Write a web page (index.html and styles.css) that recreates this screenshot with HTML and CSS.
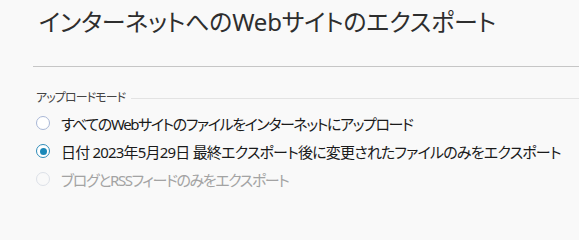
FILE: index.html
```html
<!DOCTYPE html>
<html lang="ja">
<head>
<meta charset="utf-8">
<link rel="stylesheet" href="styles.css">
</head>
<body>
<div class="page">
  <header class="header">
    <h1 class="title">インターネットへのWebサイトのエクスポート</h1>
  </header>
  <section class="group">
    <div class="legend"><span class="legend-text">アップロードモード</span><span class="legend-line"></span></div>
    <label class="option">
      <span class="radio"></span>
      <span class="option-text">すべてのWebサイトのファイルをインターネットにアップロード</span>
    </label>
    <label class="option">
      <span class="radio checked"></span>
      <span class="option-text option-text-mixed">日付 2023年5月29日 最終エクスポート後に変更されたファイルのみをエクスポート</span>
    </label>
    <label class="option disabled">
      <span class="radio"></span>
      <span class="option-text">ブログとRSSフィードのみをエクスポート</span>
    </label>
  </section>
</div>
</body>
</html>
```
FILE: styles.css
```css
html, body {
  margin: 0;
  padding: 0;
  background: #f9f9f9;
}
body {
  font-family: "Noto Sans", "Noto Sans CJK JP", sans-serif;
  font-feature-settings: "palt";
  color: #1a1a1a;
  width: 579px;
  height: 201px;
  overflow: hidden;
}
.header {
  margin-left: 33px;
  padding-left: 6px;
  height: 67px;
  box-sizing: border-box;
  border-bottom: 1px solid #c6c6c6;
}
.title {
  margin: 0;
  padding-top: 5px;
  font-size: 24px;
  font-weight: normal;
  letter-spacing: -0.2px;
  line-height: 34px;
  color: #2e2e2e;
  white-space: nowrap;
}
.group {
  margin-left: 36px;
  margin-top: 20px;
}
.legend {
  display: flex;
  align-items: center;
  height: 20px;
  font-size: 12px;
  letter-spacing: -0.9px;
  color: #444;
}
.legend-line {
  flex: 1;
  height: 1px;
  background: #e3e3e3;
  margin-left: 6px;
  margin-top: 2px;
}
.group .legend + .option {
  margin-top: 2px;
}
.option {
  display: flex;
  align-items: center;
  height: 28px;
  font-size: 15px;
  white-space: nowrap;
}
.option-text {
  letter-spacing: -1.4px;
}
.option-text-mixed {
  letter-spacing: -0.8px;
}
.radio {
  width: 14px;
  height: 14px;
  box-sizing: border-box;
  border: 1.3px solid #a9b7d6;
  border-radius: 50%;
  background: #fff;
  margin-right: 11px;
  display: flex;
  align-items: center;
  justify-content: center;
  flex: none;
}
.radio.checked {
  border-color: #2f8cb9;
}
.radio.checked::after {
  content: "";
  width: 7px;
  height: 7px;
  border-radius: 50%;
  background: #1a88b8;
}
.disabled {
  color: #a3a3a3;
}
.disabled .radio {
  border-color: #dde1e8;
  background: #f9f9f9;
}
```
